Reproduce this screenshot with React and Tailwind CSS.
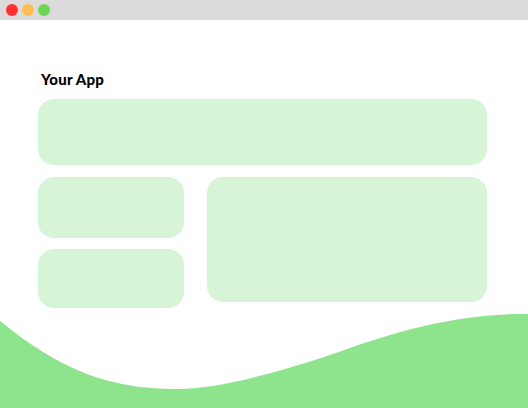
export default function App() {
  return (
    <div className="relative w-[528px] h-[408px] overflow-hidden bg-white" style={{ fontFamily: 'Lato, "Liberation Sans", sans-serif' }}>
      <div className="h-[20px] bg-[#dcdadb] flex items-center gap-[4px] pl-[6px]">
        <span className="w-[12px] h-[12px] rounded-full bg-[#fe3030]" />
        <span className="w-[12px] h-[12px] rounded-full bg-[#ffbe54]" />
        <span className="w-[12px] h-[12px] rounded-full bg-[#6fd555]" />
      </div>
      <div className="pl-[38px] pr-[41px] pt-[50px]">
        <h1 className="pl-[3px] text-[15px] leading-[18px] font-black tracking-[0.2px] text-black">Your App</h1>
        <div className="mt-[11px] h-[66px] rounded-[16px] bg-[#d5f5d6]" />
        <div className="mt-[12px] flex gap-[23px]">
          <div className="w-[146px] flex flex-col gap-[11px]">
            <div className="h-[61px] rounded-[16px] bg-[#d5f5d6]" />
            <div className="h-[59px] rounded-[16px] bg-[#d5f5d6]" />
          </div>
          <div className="flex-1 h-[125px] rounded-[16px] bg-[#d5f5d6]" />
        </div>
      </div>
      <svg className="absolute left-0 top-0" width="528" height="408" viewBox="0 0 528 408">
        <path d="M0,321 C60,370 110,389 175,389 C215,389 270,375 330,355 C380,337 450,313 528,314 L528,408 L0,408 Z" fill="#8ee38d" />
      </svg>
    </div>
  );
}
